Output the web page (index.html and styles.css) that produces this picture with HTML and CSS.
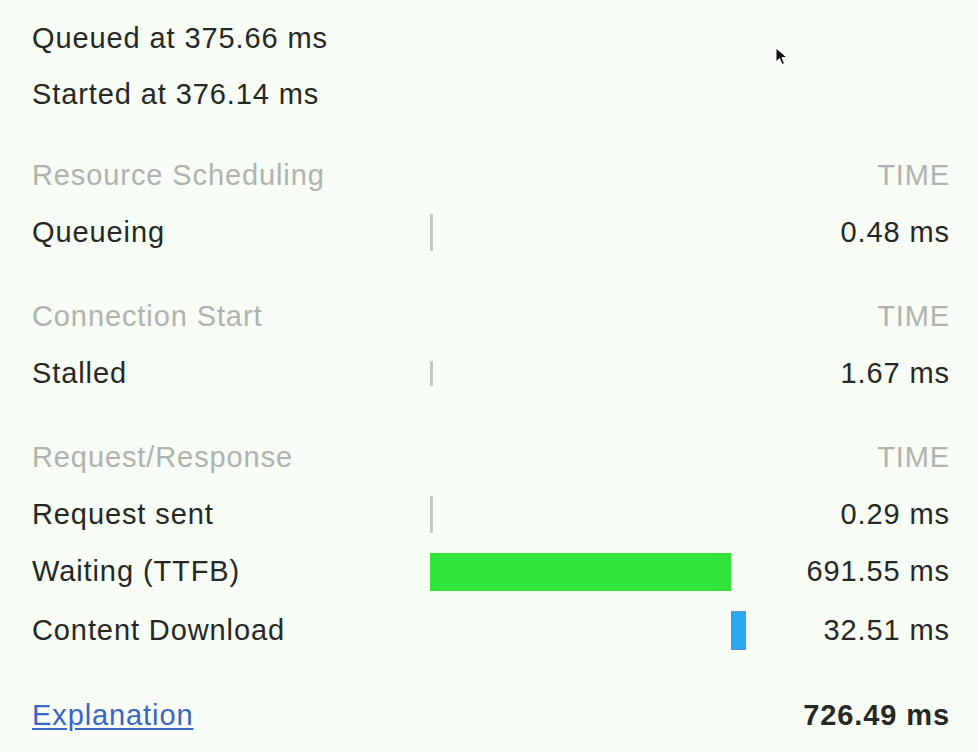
FILE: index.html
```html
<!DOCTYPE html>
<html lang="en">

<head>
    <meta charset="UTF-8">
    <meta name="viewport" content="width=device-width, initial-scale=1.0">
    <title>Timing</title>
    <link rel="stylesheet" href="styles.css">
</head>

<body>
    <main class="timing">
        <div class="stamp">Queued at 375.66 ms</div>
        <div class="stamp">Started at 376.14 ms</div>

        <section class="group">
            <div class="row head">
                <span class="label">Resource Scheduling</span>
                <span class="track"></span>
                <span class="time">TIME</span>
            </div>
            <div class="row">
                <span class="label">Queueing</span>
                <span class="track"><i class="bar tiny" style="margin-left: 0%;"></i></span>
                <span class="time">0.48 ms</span>
            </div>
        </section>

        <section class="group">
            <div class="row head">
                <span class="label">Connection Start</span>
                <span class="track"></span>
                <span class="time">TIME</span>
            </div>
            <div class="row">
                <span class="label">Stalled</span>
                <span class="track"><i class="bar tiny short" style="margin-left: 0%;"></i></span>
                <span class="time">1.67 ms</span>
            </div>
        </section>

        <section class="group">
            <div class="row head">
                <span class="label">Request/Response</span>
                <span class="track"></span>
                <span class="time">TIME</span>
            </div>
            <div class="row">
                <span class="label">Request sent</span>
                <span class="track"><i class="bar tiny" style="margin-left: 0%;"></i></span>
                <span class="time">0.29 ms</span>
            </div>
            <div class="row">
                <span class="label">Waiting (TTFB)</span>
                <span class="track"><i class="bar waiting" style="margin-left: 0%; width: 95.2%;"></i></span>
                <span class="time">691.55 ms</span>
            </div>
            <div class="row last">
                <span class="label">Content Download</span>
                <span class="track"><i class="bar download" style="margin-left: 95.2%; width: 5%;"></i></span>
                <span class="time">32.51 ms</span>
            </div>
        </section>

        <div class="row total">
            <a class="label" href="#">Explanation</a>
            <span class="track"></span>
            <span class="time">726.49 ms</span>
        </div>

        <!-- mouse pointer from the capture -->
        <svg class="cursor" width="14" height="20" viewBox="0 0 14 20">
            <path d="M1 1 L1 15 L4.5 11.5 L7 17.5 L9.5 16.5 L7 10.5 L12 10.5 Z" fill="#111" stroke="#fff" stroke-width="1"/>
        </svg>
    </main>
</body>

</html>
```

FILE: styles.css
```css
html, body {
    margin: 0;
    background-color: #f7fcf5;
}

body {
    font-family: "Liberation Sans", Arial, sans-serif;
    font-size: 29px;
    letter-spacing: 0.9px;
    color: #262826;
}

.timing {
    position: relative;
    padding: 10px 27px 0 32px;
    height: 742px;
    box-sizing: border-box;
}

.stamp {
    height: 56px;
    line-height: 56px;
}

.group {
    margin-top: 25px;
}

.group + .group {
    margin-top: 27px;
}

.row {
    display: grid;
    grid-template-columns: 398px 316px 1fr;
    align-items: center;
    height: 57px;
}

.row.last {
    margin-top: 2px;
}

.row .time {
    text-align: right;
}

.head {
    color: #b0b3af;
}

.track {
    display: flex;
    align-items: center;
    height: 100%;
}

.bar {
    display: block;
    height: 38px;
    box-sizing: border-box;
}

.bar.tiny {
    width: 3px;
    height: 37px;
    background-color: #c6c8c5;
}

.bar.short {
    height: 25px;
}

.bar.waiting {
    background-color: #32e339;
}

.bar.download {
    height: 39px;
    background-color: #2aa9f3;
    border: 1px solid #5c8fd6;
}

.total {
    margin-top: 28px;
}

.total .label {
    justify-self: start;
    color: #3a66c6;
    text-decoration: underline;
    text-underline-offset: 3px;
}

.total .time {
    font-weight: bold;
}

.cursor {
    position: absolute;
    left: 775px;
    top: 47px;
}
```
